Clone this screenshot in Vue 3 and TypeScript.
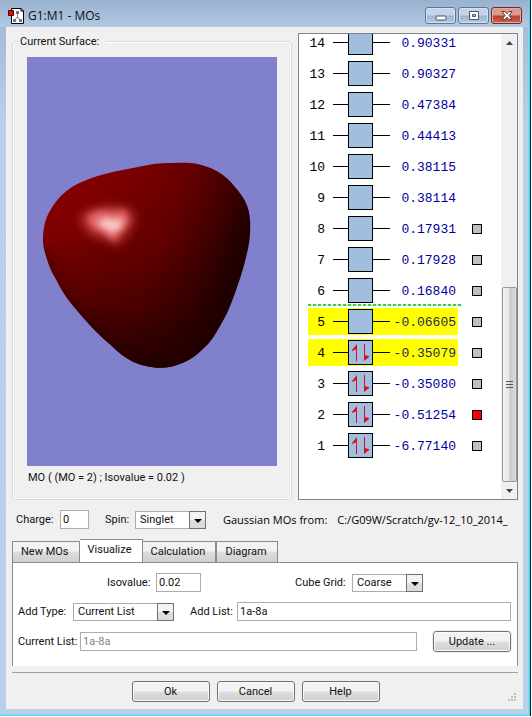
<script setup lang="ts">
import { ref } from 'vue'

interface Orbital {
  index: number
  energy: string
  occupied?: boolean
  highlighted?: boolean
  marker?: 'idle' | 'active'
}

const orbitals: Orbital[] = [
  { index: 14, energy: '0.90331' },
  { index: 13, energy: '0.90327' },
  { index: 12, energy: '0.47384' },
  { index: 11, energy: '0.44413' },
  { index: 10, energy: '0.38115' },
  { index: 9, energy: '0.38114' },
  { index: 8, energy: '0.17931', marker: 'idle' },
  { index: 7, energy: '0.17928', marker: 'idle' },
  { index: 6, energy: '0.16840', marker: 'idle' },
  { index: 5, energy: '-0.06605', highlighted: true, marker: 'idle' },
  { index: 4, energy: '-0.35079', highlighted: true, occupied: true, marker: 'idle' },
  { index: 3, energy: '-0.35080', occupied: true, marker: 'idle' },
  { index: 2, energy: '-0.51254', occupied: true, marker: 'active' },
  { index: 1, energy: '-6.77140', occupied: true, marker: 'idle' },
]

const tabs = ['New MOs', 'Visualize', 'Calculation', 'Diagram']
const activeTab = ref('Visualize')

const charge = ref('0')
const spin = ref('Singlet')
const isovalue = ref('0.02')
const cubeGrid = ref('Coarse')
const addType = ref('Current List')
const addList = ref('1a-8a')
const currentList = ref('1a-8a')
</script>

<template>
  <div class="window">
    <header class="titlebar">
      <svg class="app-icon" width="16" height="16" viewBox="0 0 16 16" aria-hidden="true">
        <path d="M3.500 .5H13L15.500 3V15.500H3.500Z" fill="#fff" stroke="#000" />
        <path d="M13 .5V3H15.500" fill="none" stroke="#000" />
        <path d="M9.500 5V9L6.500 12M9.500 9L12.500 12" fill="none" stroke="#777" />
        <path d="M8 3H11V6H8ZM5 11H8V14H5ZM11 11H14V14H11Z" fill="#777" />
        <path d="M.5 2.500H5.500V7.500H.5Z" fill="#e00" stroke="#500" />
      </svg>
      <h1 class="title">G1:M1 - MOs</h1>
      <div class="caption-buttons">
        <button class="caption" type="button" aria-label="Minimize">
          <svg width="12" height="11" viewBox="0 0 12 11"><rect x="1" y="6" width="10" height="4" rx="1" fill="#fff" stroke="#4b5461" /></svg>
        </button>
        <button class="caption" type="button" aria-label="Maximize">
          <svg width="12" height="11" viewBox="0 0 12 11"><path d="M1.500 1.500H10.500V9.500H1.500ZM4.500 4.500V6.500H7.500V4.500Z" fill="#fff" fill-rule="evenodd" stroke="#4b5461" /></svg>
        </button>
        <button class="caption close" type="button" aria-label="Close">
          <svg width="12" height="11" viewBox="0 0 12 11"><path d="M1 1.500H4L6 3.700L8 1.500H11L8 5.500L11 9.500H8L6 7.300L4 9.500H1L4 5.500Z" fill="#fff" stroke="#55343a" /></svg>
        </button>
      </div>
    </header>

    <main class="client">
      <div class="viewer">
        <fieldset class="surface">
          <legend>Current Surface:</legend>
          <svg class="scene" viewBox="0 0 250 408" preserveAspectRatio="xMidYMid slice" role="img" aria-label="Molecular orbital surface">
            <defs>
              <linearGradient id="body" gradientUnits="userSpaceOnUse" x1="30" y1="130" x2="213" y2="196">
                <stop offset="0" stop-color="#8a0000" />
                <stop offset=".3" stop-color="#7c0000" />
                <stop offset=".6" stop-color="#680000" />
                <stop offset=".82" stop-color="#440000" />
                <stop offset=".98" stop-color="#220000" />
              </linearGradient>
              <linearGradient id="lower" gradientUnits="userSpaceOnUse" x1="125" y1="115" x2="105" y2="305">
                <stop offset="0" stop-color="#200000" stop-opacity="0" />
                <stop offset=".35" stop-color="#200000" stop-opacity=".08" />
                <stop offset=".7" stop-color="#200000" stop-opacity=".42" />
                <stop offset="1" stop-color="#200000" stop-opacity=".9" />
              </linearGradient>
              <filter id="soft" x="-50%" y="-50%" width="200%" height="200%"><feGaussianBlur stdDeviation="3" /></filter>
              <filter id="rim" x="-50%" y="-50%" width="200%" height="200%"><feGaussianBlur stdDeviation="5" /></filter>
              <path id="blob" d="M16.300 180C16.600 169 19 160 24.700 151C30 142 37 135 44.700 130C52 125.500 61 122 70 119C82 115.500 94 112.700 106 110.700C116 108.700 126 106.400 136 106C146 105.600 158 105 166 106C175 107.500 182 109.600 190 114C197 118 203 123 208 130C213 136 217 141 219.700 148C222.500 155 223 162 223 170C223 180 221.700 188 219.700 196C217 208 213.500 219 209.700 230C205 244 200 257 193 268C188 277 183 285 176 291C170 297 164 301.500 156 305C149 308 141 310 133 310C124 310 114 307.500 106 304C98 300 92 295 84.700 288C73 278 64 269 53 256C44 246 36 236 30 223C25 215 22 208 19.700 200C17.500 193 16 187 16.300 180Z" />
              <clipPath id="blob-clip"><use href="#blob" /></clipPath>
            </defs>
            <rect x="-400" y="-400" width="1050" height="1208" fill="#8080cc" />
            <use href="#blob" fill="url(#body)" />
            <use href="#blob" fill="url(#lower)" />
            <g clip-path="url(#blob-clip)">
              <path d="M16 190C20 215 36 238 53 256L85 288L106 304L133 310" fill="none" stroke="#200000" stroke-width="7" opacity=".45" filter="url(#rim)" />
              <path d="M52 160L62 152L80 148L98 149L109 156L105 172L92 188L78 183L60 176Z" fill="#d84b4b" opacity=".6" filter="url(#rim)" />
              <path d="M60 160L71 153L86 154L99 153L102 165L93 176L87 184L77 176L65 170Z" fill="#ff8c8c" opacity=".65" filter="url(#soft)" />
              <path d="M70 165L79 160L87 162L96 162L94 171L86 175L77 171Z" fill="#ffe0e0" opacity=".8" filter="url(#soft)" />
            </g>
          </svg>
          <p class="caption-text">MO ( (MO = 2) ; Isovalue = 0.02 )</p>
        </fieldset>

        <section class="diagram" aria-label="Orbital energies">
          <ul class="levels">
            <li v-for="o in orbitals" :key="o.index" class="level" :class="{ lumo: o.index === 5 }">
              <div class="level-main" :class="{ highlighted: o.highlighted }">
                <span class="index">{{ o.index }}</span>
                <span class="wire"></span>
                <span class="box">
                  <svg v-if="o.occupied" width="23" height="23" viewBox="0 0 23 23" aria-hidden="true">
                    <path d="M7.500 20V4M15.500 3V19" stroke="#d8101c" fill="none" />
                    <path d="M8 3V8L3 10V9ZM15 20V14L20 15V16Z" fill="#d8101c" />
                  </svg>
                </span>
                <span class="wire right"></span>
                <span class="energy">{{ o.energy }}</span>
              </div>
              <button v-if="o.marker" class="marker" :class="o.marker" type="button" :aria-label="`Surface of orbital ${o.index}`"></button>
            </li>
          </ul>
          <div class="scrollbar" aria-hidden="true">
            <svg class="arrow" width="7" height="4" viewBox="0 0 7 4"><path d="M3.500 0L7 4H0Z" fill="#444" /></svg>
            <div class="track"></div>
            <div class="thumb"><i></i><i></i><i></i></div>
            <svg class="arrow" width="7" height="4" viewBox="0 0 7 4"><path d="M0 0H7L3.500 4Z" fill="#444" /></svg>
          </div>
        </section>
      </div>

      <div class="molecule">
        <label class="charge-label" for="charge">Charge:</label>
        <input id="charge" v-model="charge" class="field charge" type="text" />
        <label class="spin-label" for="spin">Spin:</label>
        <span class="combo short">
          <select id="spin" v-model="spin"><option>Singlet</option><option>Triplet</option></select>
          <span class="drop"><svg width="8" height="4" viewBox="0 0 8 4"><path d="M0 0H8L4 4Z" /></svg></span>
        </span>
        <span class="source"><span>Gaussian MOs from:</span><span>C:/G09W/Scratch/gv-12_10_2014_</span></span>
      </div>

      <div class="tabs" role="tablist">
        <button v-for="t in tabs" :key="t" class="tab" :class="{ active: t === activeTab }" type="button" role="tab" :aria-selected="t === activeTab" @click="activeTab = t">{{ t }}</button>
      </div>

      <div class="panel" role="tabpanel">
        <div class="row first">
          <label class="iso-label" for="isovalue">Isovalue:</label>
          <input id="isovalue" v-model="isovalue" class="field iso" type="text" />
          <label class="grid-label" for="grid">Cube Grid:</label>
          <span class="combo short">
            <select id="grid" v-model="cubeGrid"><option>Coarse</option><option>Medium</option><option>Fine</option></select>
            <span class="drop"><svg width="8" height="4" viewBox="0 0 8 4"><path d="M0 0H8L4 4Z" /></svg></span>
          </span>
        </div>
        <div class="row">
          <label class="type-label" for="add-type">Add Type:</label>
          <span class="combo long">
            <select id="add-type" v-model="addType"><option>Current List</option><option>All</option></select>
            <span class="drop"><svg width="8" height="4" viewBox="0 0 8 4"><path d="M0 0H8L4 4Z" /></svg></span>
          </span>
          <label class="list-label" for="add-list">Add List:</label>
          <input id="add-list" v-model="addList" class="field grow" type="text" />
        </div>
        <div class="row">
          <label class="current-label" for="current-list">Current List:</label>
          <input id="current-list" v-model="currentList" class="field grow" type="text" disabled />
          <button class="push update" type="button">Update ...</button>
        </div>
      </div>

      <footer class="actions">
        <button class="push" type="button">Ok</button>
        <button class="push" type="button">Cancel</button>
        <button class="push" type="button">Help</button>
        <svg class="grip" width="8" height="8" viewBox="0 0 8 8" aria-hidden="true"><path d="M6 0h2v2H6ZM6 3h2v2H6ZM3 3h2v2H3ZM0 6h2v2H0ZM3 6h2v2H3ZM6 6h2v2H6Z" fill="#bcbcbc" /></svg>
      </footer>
    </main>
  </div>
</template>

<style>
body {
  margin: 0;
}
</style>

<style scoped>
.window,
.window * {
  box-sizing: border-box;
}

.window {
  display: flex;
  flex-direction: column;
  min-height: calc(100vh - 1px);
  margin-right: 2px;
  padding: 0 6px 6px;
  border-right: 1px solid #55d3ec;
  border-bottom: 1px solid #55d3ec;
  outline: 1px solid #0b1420;
  background: linear-gradient(#9db6d2, #b9cfe8 120px, #b9d0ea);
  box-shadow: inset -1px -1px #7adcf0;
  color: #111;
  font: 11px/14px Roboto, "Liberation Sans", Arial, sans-serif;
}

button,
input,
select {
  font: inherit;
  color: inherit;
}

.titlebar {
  display: flex;
  align-items: center;
  height: 27px;
  margin: 0 -6px;
  padding: 4px 2px 0 8px;
  background: linear-gradient(#98b1ce, #b2c9e3);
}

.title {
  margin: 0 auto 0 4px;
  font: 12px/16px "Open Sans", "Noto Sans", sans-serif;
}

.caption-buttons {
  display: flex;
  gap: 2px;
  padding-right: 5px;
}

.caption {
  display: grid;
  place-items: center;
  width: 31px;
  height: 17px;
  padding: 0;
  border: 1px solid #5f7692;
  border-radius: 3px;
  background: linear-gradient(#c3d4e8 48%, #9cb5d1 52%, #b4cae3);
  box-shadow: inset 0 0 0 1px #d5e2f0;
}

.close {
  border-color: #6b2b2b;
  background: linear-gradient(#dd9a8c 48%, #b9402c 52%, #cb6450);
  box-shadow: inset 0 0 0 1px #e3aca2;
}

.client {
  display: flex;
  flex: 1;
  flex-direction: column;
  padding: 6px 5px 7px 6px;
  background: #f0f0f0;
}

.viewer {
  display: grid;
  flex: 1;
  grid-template-columns: 280fr 220fr;
  gap: 6px;
}

.surface {
  position: relative;
  display: flex;
  flex-direction: column;
  min-width: 0;
  margin: 8px 0 0;
  padding: 15px 14px 14px;
  border: 1px solid #d8dade;
  border-radius: 3px;
  box-shadow: inset 0 0 0 1px #fff;
}

.surface legend {
  position: absolute;
  top: -7px;
  left: 4px;
  padding: 0 8px 0 3px;
  background: #f0f0f0;
}

.scene {
  flex: 1;
  width: 100%;
  height: 0;
  min-height: 300px;
}

.caption-text {
  margin: 5px 0 0 1px;
}

.diagram {
  display: flex;
  overflow: hidden;
  border: 1px solid #7d838c;
  background: #fff;
}

.levels {
  flex: 1;
  margin: -7px 0 38px;
  padding: 0 0 0 9px;
  list-style: none;
}

.level {
  position: relative;
  display: flex;
  align-items: center;
  gap: 14px;
  height: 31px;
}

.level.lumo::before {
  position: absolute;
  top: -2px;
  left: 0;
  width: 154px;
  height: 2px;
  background: repeating-linear-gradient(90deg, #3ecb43 0 3px, #d5f5d5 3px 5px);
  content: "";
}

.level-main {
  display: flex;
  align-items: center;
  width: 150px;
  height: 27px;
  color: #0000a0;
  font: 13px/16px "Liberation Mono", "Courier New", monospace;
}

.highlighted {
  background: #ff0;
  color: #28285c;
}

.index {
  width: 17px;
  margin-right: 8px;
  padding-top: 2px;
  color: #000;
  text-align: right;
}

.wire {
  width: 15px;
  height: 1px;
  background: #000;
}

.wire.right {
  width: 17px;
}

.box {
  width: 25px;
  height: 25px;
  border: 1px solid #000;
  background: #a1bede;
}

.box svg {
  display: block;
}

.energy {
  flex: 1;
  padding: 2px 2px 0 0;
  text-align: right;
}

.marker {
  width: 10px;
  height: 10px;
  padding: 0;
  border: 1px solid #000;
  background: #c0c0c0;
}

.marker.active {
  background: #f00;
}

.scrollbar {
  display: flex;
  flex-direction: column;
  align-items: center;
  width: 16px;
  background: #f0f0f0;
}

.arrow {
  margin: 7px 0 6px;
}

.track {
  flex: 238;
}

.thumb {
  display: flex;
  flex: 194;
  flex-direction: column;
  align-items: center;
  justify-content: center;
  gap: 1px;
  width: 15px;
  border: 1px solid #989898;
  border-radius: 2px;
  background: linear-gradient(90deg, #f5f5f5, #e6e6e8 45%, #c9c9cc 55%, #dcdcde);
}

.thumb i {
  width: 7px;
  height: 2px;
  border-top: 1px solid #555;
}

.molecule {
  display: flex;
  align-items: center;
  height: 39px;
  padding-left: 4px;
  white-space: nowrap;
}

.molecule > * {
  flex-shrink: 0;
}

.charge-label {
  width: 44px;
}

.field {
  height: 19px;
  min-width: 0;
  margin: 0;
  padding: 0 2px;
  border: 1px solid #abadb3;
  border-radius: 0;
  background: #fff;
}

.field:disabled {
  color: #838383;
}

.charge {
  width: 29px;
}

.spin-label {
  width: 30px;
  margin-left: 16px;
}

.combo {
  position: relative;
  display: flex;
  height: 18px;
}

.short {
  width: 71px;
}

.long {
  width: 101px;
}

.combo select {
  width: 100%;
  padding: 0 18px 0 4px;
  border: 1px solid #abadb3;
  border-radius: 0;
  background: #fff;
  appearance: none;
}

.drop {
  position: absolute;
  inset: 0 0 0 auto;
  display: grid;
  place-items: center;
  width: 17px;
  padding-top: 3px;
  border: 1px solid #707070;
  background: linear-gradient(#f4f4f4 50%, #dcdcdc 50%);
  pointer-events: none;
}

.source {
  display: flex;
  gap: 10px;
  margin-left: 17px;
  color: #000;
  font: 11px/16px "Open Sans", "Noto Sans", sans-serif;
}

.tabs {
  display: flex;
  align-items: flex-end;
  height: 23px;
}

.tab {
  height: 21px;
  padding: 0 10px 0 8px;
  border: 1px solid #898c95;
  border-bottom: 0;
  border-left-width: 0;
  background: linear-gradient(#f2f2f2 45%, #dddddd 50%, #cfcfcf);
}

.tab:first-child,
.tab:last-child {
  border-left-width: 1px;
}

.tab.active {
  height: 24px;
  margin-bottom: -1px;
  padding-bottom: 3px;
  background: #fff;
}

.panel {
  display: flex;
  flex-direction: column;
  gap: 10px;
  padding: 10px 6px 14px 5px;
  border: solid #898c95;
  border-width: 1px 1px 0;
  background: #fff;
}

.row {
  display: flex;
  align-items: center;
  min-height: 19px;
  white-space: nowrap;
}

.first {
  padding-left: 89px;
}

.iso-label {
  width: 49px;
}

.iso {
  width: 45px;
}

.grid-label {
  width: 57px;
  margin-left: 94px;
}

.type-label {
  width: 55px;
}

.list-label {
  width: 47px;
  margin-left: 16px;
}

.current-label {
  width: 62px;
}

.grow {
  flex: 1;
}

.push {
  width: 78px;
  height: 21px;
  padding: 0;
  border: 1px solid #707070;
  border-radius: 3px;
  background: linear-gradient(#f3f3f3 48%, #dedede 52%, #cfcfcf);
  box-shadow: inset 0 0 0 1px #fafafa;
}

.update {
  margin-left: 16px;
  outline: 1px solid #f0f0f0;
}

.actions {
  position: relative;
  display: flex;
  gap: 7px;
  justify-content: center;
  margin-top: 6px;
  padding-top: 8px;
  padding-right: 19px;
  border-top: 1px solid #a0a0a0;
}

.grip {
  position: absolute;
  right: 2px;
  bottom: 1px;
}
</style>
